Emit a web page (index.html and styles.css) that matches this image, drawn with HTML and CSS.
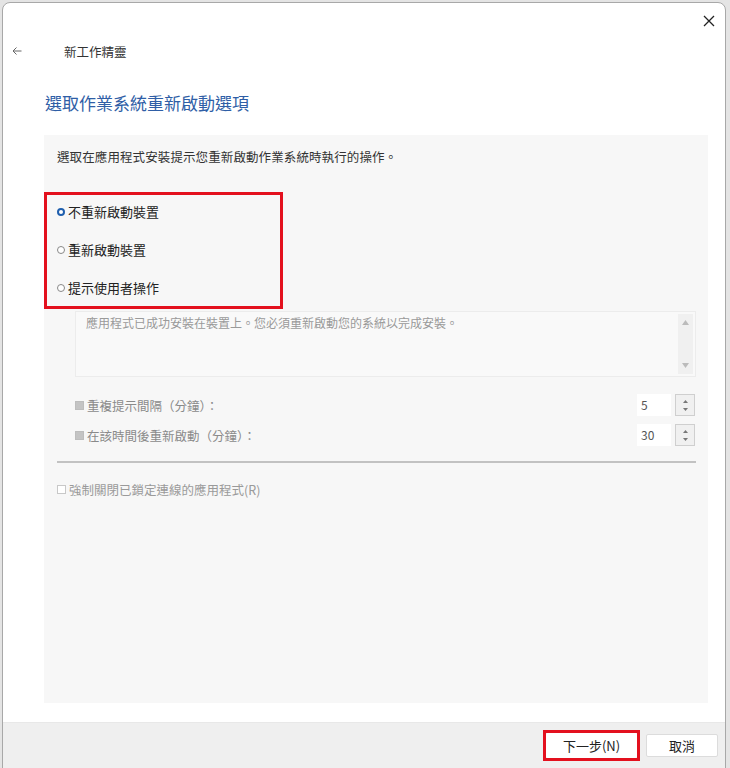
FILE: index.html
```html
<!DOCTYPE html>
<html lang="zh-Hant">
<head>
<meta charset="utf-8">
<link rel="stylesheet" href="styles.css">
</head>
<body>
<div class="window">
  <div class="topbar">
    <button class="close" aria-label="close">
      <svg width="12" height="12" viewBox="0 0 12 12"><path d="M1 1L11 11M11 1L1 11" stroke="#222" stroke-width="1.3" fill="none"/></svg>
    </button>
  </div>
  <div class="titlerow">
    <svg class="back" width="10" height="8" viewBox="0 0 10 8"><path d="M9.5 4H1M4.5 0.5L1 4L4.5 7.5" stroke="#666" stroke-width="1" fill="none"/></svg>
    <span class="title">新工作精靈</span>
  </div>
  <h1 class="heading">選取作業系統重新啟動選項</h1>
  <div class="panel">
    <p class="desc">選取在應用程式安裝提示您重新啟動作業系統時執行的操作。</p>
    <div class="radios">
      <div class="radio"><span class="dot on"></span>不重新啟動裝置</div>
      <div class="radio"><span class="dot"></span>重新啟動裝置</div>
      <div class="radio"><span class="dot"></span>提示使用者操作</div>
    </div>
    <div class="sub">
      <div class="textarea">
        <span class="ta-text">應用程式已成功安裝在裝置上。您必須重新啟動您的系統以完成安裝。</span>
        <div class="scroll">
          <svg width="7" height="5" viewBox="0 0 7 5"><path d="M0 5L3.5 0L7 5Z" fill="#bbb"/></svg>
          <svg width="7" height="5" viewBox="0 0 7 5"><path d="M0 0L3.5 5L7 0Z" fill="#bbb"/></svg>
        </div>
      </div>
      <div class="row first">
        <span class="chk filled"></span><span class="lbl">重複提示間隔（分鐘）：</span>
        <span class="num">5</span>
        <span class="spin">
          <svg width="5" height="3" viewBox="0 0 5 3"><path d="M0 3L2.5 0L5 3Z" fill="#777"/></svg>
          <svg width="5" height="3" viewBox="0 0 5 3"><path d="M0 0L2.5 3L5 0Z" fill="#777"/></svg>
        </span>
      </div>
      <div class="row">
        <span class="chk filled"></span><span class="lbl">在該時間後重新啟動（分鐘）：</span>
        <span class="num">30</span>
        <span class="spin">
          <svg width="5" height="3" viewBox="0 0 5 3"><path d="M0 3L2.5 0L5 3Z" fill="#777"/></svg>
          <svg width="5" height="3" viewBox="0 0 5 3"><path d="M0 0L2.5 3L5 0Z" fill="#777"/></svg>
        </span>
      </div>
    </div>
    <hr class="divider">
    <div class="force"><span class="chk"></span>強制關閉已鎖定連線的應用程式(R)</div>
  </div>
  <div class="footer">
    <span class="hl"><button class="btn">下一步(N)</button></span>
    <button class="btn cancel">取消</button>
  </div>
</div>
</body>
</html>
```
FILE: styles.css
```css
html, body {
  margin: 0;
  padding: 0;
  background: #e4e4e4;
  font-family: "Noto Sans CJK TC", "Noto Sans", sans-serif;
  width: 730px;
  height: 768px;
  overflow: hidden;
}
.window {
  margin: 2px 0 0 2px;
  width: 722px;
  height: 780px;
  background: #fff;
  border: 1px solid #a8a8a8;
  border-radius: 8px 8px 0 0;
  display: flex;
  flex-direction: column;
  overflow: hidden;
}
.topbar {
  height: 32px;
  display: flex;
  justify-content: flex-end;
}
.close {
  border: 0;
  background: none;
  padding: 0;
  margin: 10px 8px 0 0;
  width: 16px;
  height: 16px;
  display: flex;
  align-items: center;
  justify-content: center;
}
.titlerow {
  height: 32px;
  display: flex;
  align-items: center;
  padding-left: 9px;
}
.back { margin-right: 42px; }
.title {
  font-size: 12.5px;
  color: #333;
}
.heading {
  margin: 24px 0 0 42px;
  font-size: 17px;
  font-weight: 400;
  color: #2f5ea6;
  line-height: 24px;
}
.panel {
  margin: 20px 0 0 41px;
  width: 664px;
  height: 568px;
  background: #f7f7f7;
  box-sizing: border-box;
  padding: 12px 12px 0 13px;
}
.desc {
  margin: 0;
  font-size: 12.5px;
  line-height: 20px;
  color: #333;
  letter-spacing: 0.1px;
}
.radios {
  margin: 25px 0 0 -13px;
  width: 239px;
  height: 117px;
  border: 3px solid #e3101e;
  box-sizing: border-box;
  display: flex;
  flex-direction: column;
  padding: 7px 0 0 10px;
  gap: 18px;
}
.radio {
  display: flex;
  align-items: center;
  font-size: 13px;
  line-height: 20px;
  color: #222;
}
.dot {
  width: 6px;
  height: 6px;
  border: 1px solid #888;
  border-radius: 50%;
  margin-right: 3px;
  background: #fff;
}
.dot.on {
  border: 2px solid #1f5fae;
  width: 4px;
  height: 4px;
}
.sub {
  margin: 2px 0 0 18px;
}
.textarea {
  width: 621px;
  height: 66px;
  box-sizing: border-box;
  border: 1px solid #ececec;
  background: #f9f9f9;
  display: flex;
  justify-content: space-between;
  padding: 2px 2px 2px 10px;
}
.ta-text {
  font-size: 12px;
  line-height: 18px;
  color: #9a9a9a;
}
.scroll {
  width: 15px;
  background: #f0f0f0;
  display: flex;
  flex-direction: column;
  justify-content: space-between;
  align-items: center;
  padding: 6px 0 6px;
}
.row {
  display: flex;
  align-items: center;
  height: 24px;
  margin-top: 6px;
}
.row.first { margin-top: 16px; }
.chk {
  width: 7px;
  height: 7px;
  border: 1px solid #c8c8c8;
  background: #fff;
  margin-right: 3px;
}
.chk.filled {
  background: #c4c4c4;
  border-color: #bdbdbd;
}
.lbl {
  font-size: 12.5px;
  color: #8a8a8a;
  flex: 1;
}
.num {
  width: 34px;
  height: 22px;
  background: #fff;
  font-size: 12px;
  line-height: 22px;
  color: #555;
  padding-left: 4px;
  box-sizing: border-box;
  margin-right: 4px;
}
.spin {
  width: 20px;
  height: 22px;
  box-sizing: border-box;
  border: 1px solid #cfcfcf;
  background: #f0f0f0;
  display: flex;
  flex-direction: column;
  align-items: center;
  justify-content: center;
  gap: 5px;
  margin-right: 1px;
}
.divider {
  margin: 14px 0 0 0;
  border: 0;
  border-top: 2px solid #c2c2c2;
  width: 639px;
}
.force {
  margin-top: 17px;
  display: flex;
  align-items: center;
  font-size: 12.5px;
  color: #9a9a9a;
}
.footer {
  margin-top: 19px;
  height: 45px;
  background: #efefef;
  border-top: 1px solid #e8e8e8;
  display: flex;
  justify-content: flex-end;
  align-items: flex-start;
  padding: 7px 7px 0 0;
  gap: 6px;
}
.hl {
  border: 3px solid #e3101e;
  display: flex;
}
.btn {
  font-family: inherit;
  font-size: 13px;
  color: #222;
  background: #fff;
  border: 1px solid #dcdcdc;
  border-radius: 2px;
  height: 25px;
  padding: 0;
  width: 91px;
}
.hl .btn { border-color: #fff; }
.cancel {
  width: 72px;
  height: 23px;
  margin-top: 4px;
}
```
